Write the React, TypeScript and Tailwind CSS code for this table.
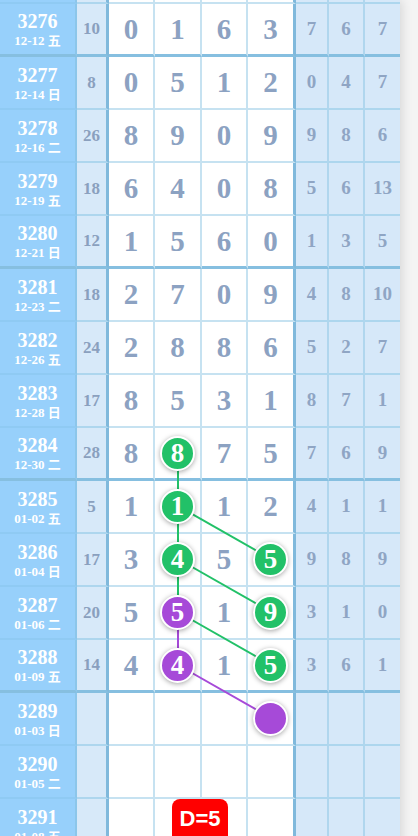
import React from "react"

type Mark = { col: number; color: "g" | "p"; empty?: boolean }

type Row = {
  issue: string
  date: string
  sum?: string
  digits?: string[]
  tail?: string[]
  marks?: Mark[]
  thick?: boolean
}

const rows: Row[] = [
  { issue: "3276", date: "12-12 五", sum: "10", digits: ["0", "1", "6", "3"], tail: ["7", "6", "7"], thick: true },
  { issue: "3277", date: "12-14 日", sum: "8", digits: ["0", "5", "1", "2"], tail: ["0", "4", "7"] },
  { issue: "3278", date: "12-16 二", sum: "26", digits: ["8", "9", "0", "9"], tail: ["9", "8", "6"] },
  { issue: "3279", date: "12-19 五", sum: "18", digits: ["6", "4", "0", "8"], tail: ["5", "6", "13"] },
  { issue: "3280", date: "12-21 日", sum: "12", digits: ["1", "5", "6", "0"], tail: ["1", "3", "5"], thick: true },
  { issue: "3281", date: "12-23 二", sum: "18", digits: ["2", "7", "0", "9"], tail: ["4", "8", "10"] },
  { issue: "3282", date: "12-26 五", sum: "24", digits: ["2", "8", "8", "6"], tail: ["5", "2", "7"] },
  { issue: "3283", date: "12-28 日", sum: "17", digits: ["8", "5", "3", "1"], tail: ["8", "7", "1"] },
  {
    issue: "3284", date: "12-30 二", sum: "28", digits: ["8", "8", "7", "5"], tail: ["7", "6", "9"], thick: true,
    marks: [{ col: 1, color: "g" }],
  },
  {
    issue: "3285", date: "01-02 五", sum: "5", digits: ["1", "1", "1", "2"], tail: ["4", "1", "1"],
    marks: [{ col: 1, color: "g" }],
  },
  {
    issue: "3286", date: "01-04 日", sum: "17", digits: ["3", "4", "5", "5"], tail: ["9", "8", "9"],
    marks: [{ col: 1, color: "g" }, { col: 3, color: "g" }],
  },
  {
    issue: "3287", date: "01-06 二", sum: "20", digits: ["5", "5", "1", "9"], tail: ["3", "1", "0"],
    marks: [{ col: 1, color: "p" }, { col: 3, color: "g" }],
  },
  {
    issue: "3288", date: "01-09 五", sum: "14", digits: ["4", "4", "1", "5"], tail: ["3", "6", "1"], thick: true,
    marks: [{ col: 1, color: "p" }, { col: 3, color: "g" }],
  },
  { issue: "3289", date: "01-03 日", marks: [{ col: 3, color: "p", empty: true }] },
  { issue: "3290", date: "01-05 二" },
  { issue: "3291", date: "01-08 五" },
]

const serif = { fontFamily: '"Liberation Serif", "Noto Sans CJK SC", serif' }

const digitW = ["w-[46px]", "w-[47px]", "w-[46px]", "w-[48px]"]
const tailW = ["w-[33px]", "w-[36px]", "w-[35px]"]

function Ball({ mark, value }: { mark: Mark; value?: string }) {
  const bg = mark.color === "g" ? "bg-[#22c168]" : "bg-[#a64ad8]"
  return (
    <div
      className={`relative z-20 flex h-[35px] w-[35px] items-center justify-center rounded-full border-2 border-white ${bg} shadow-[0_1px_5px_rgba(0,0,0,0.35)]`}
    >
      {!mark.empty && <span className="text-[27px] font-bold leading-none text-white">{value}</span>}
    </div>
  )
}

function ChartRow({ row }: { row: Row }) {
  const bThin = row.thick ? "border-b-[3px]" : "border-b-2"
  const lineWhite = row.thick ? "border-b-[#86bfe0]" : "border-b-[#c6e2f1]"
  const lineBlue = row.thick ? "border-b-[#86bfe0]" : "border-b-[#add6ee]"
  return (
    <div className="flex h-[53px]">
      <div
        className={`flex w-[77px] flex-col items-center justify-center border-r-2 border-r-[#8cc6ea] bg-[#97d0fb] text-white ${bThin} ${row.thick ? "border-b-[#86bfe0]" : "border-b-[#8fcaf3]"}`}
      >
        <span className="text-[20px] font-bold leading-[22px]">{row.issue}</span>
        <span className="mt-[2px] text-[13px] font-bold leading-[14px]">{row.date}</span>
      </div>
      <div
        className={`flex w-[32px] items-center justify-center border-r-[3px] border-r-[#80b9dc] bg-[#d7e9f9] text-[17px] font-bold text-[#8aa0be] ${bThin} ${lineBlue}`}
      >
        {row.sum}
      </div>
      {digitW.map((w, i) => {
        const mark = row.marks?.find((m) => m.col === i)
        const last = i === 3
        return (
          <div
            key={i}
            className={`flex ${w} items-center justify-center bg-white ${bThin} ${lineWhite} ${last ? "border-r-[3px] border-r-[#80b9dc]" : "border-r-2 border-r-[#c6e2f1]"}`}
          >
            {mark ? (
              <Ball mark={mark} value={row.digits?.[i]} />
            ) : (
              <span className="text-[29px] font-bold leading-none text-[#8ca2c2]">{row.digits?.[i]}</span>
            )}
          </div>
        )
      })}
      {tailW.map((w, i) => (
        <div
          key={i}
          className={`flex ${w} items-center justify-center bg-[#d6e8f9] text-[19px] font-bold text-[#8fa5c4] ${bThin} ${lineBlue} ${i < 2 ? "border-r-2 border-r-[#b0d6ee]" : ""}`}
        >
          {row.tail?.[i]}
        </div>
      ))}
    </div>
  )
}

const cx = [131, 178, 224, 271]
const cy = (i: number) => 2 + 27 + (i - 0) * 53

export default function App() {
  // index of 3284 is 8
  const g = "#22c168"
  const p = "#a64ad8"
  const lines = [
    { x1: cx[1], y1: cy(8), x2: cx[1], y2: cy(9), c: g },
    { x1: cx[1], y1: cy(9), x2: cx[1], y2: cy(10), c: g },
    { x1: cx[1], y1: cy(10), x2: cx[1], y2: cy(11), c: g },
    { x1: cx[1], y1: cy(9), x2: cx[3], y2: cy(10), c: g },
    { x1: cx[1], y1: cy(10), x2: cx[3], y2: cy(11), c: g },
    { x1: cx[1], y1: cy(11), x2: cx[3], y2: cy(12), c: g },
    { x1: cx[1], y1: cy(11), x2: cx[1], y2: cy(12), c: p },
    { x1: cx[1], y1: cy(12), x2: cx[3], y2: cy(13), c: p },
  ]

  return (
    <div className="relative h-[836px] w-[418px] overflow-hidden bg-[#f4f4f4]" style={serif}>
      <div className="relative w-[400px] bg-white shadow-[2px_0_10px_rgba(0,0,0,0.12)]">
        {/* tail of the previous row */}
        <div className="flex h-[4px]">
          <div className="w-[77px] border-r-2 border-b-2 border-r-[#8cc6ea] border-b-[#8fcaf3] bg-[#97d0fb]" />
          <div className="w-[32px] border-r-[3px] border-b-2 border-r-[#80b9dc] border-b-[#add6ee] bg-[#d7e9f9]" />
          <div className="w-[46px] border-r-2 border-b-2 border-[#c6e2f1]" />
          <div className="w-[47px] border-r-2 border-b-2 border-[#c6e2f1]" />
          <div className="w-[46px] border-r-2 border-b-2 border-[#c6e2f1]" />
          <div className="w-[48px] border-r-[3px] border-b-2 border-r-[#80b9dc] border-b-[#c6e2f1]" />
          <div className="w-[33px] border-r-2 border-b-2 border-r-[#b0d6ee] border-b-[#add6ee] bg-[#d6e8f9]" />
          <div className="w-[36px] border-r-2 border-b-2 border-r-[#b0d6ee] border-b-[#add6ee] bg-[#d6e8f9]" />
          <div className="w-[35px] border-b-2 border-b-[#add6ee] bg-[#d6e8f9]" />
        </div>

        {rows.map((r) => (
          <ChartRow key={r.issue} row={r} />
        ))}

        <svg className="pointer-events-none absolute left-0 top-0 z-10" width="400" height="900">
          {lines.map((l, i) => (
            <line key={i} x1={l.x1} y1={l.y1} x2={l.x2} y2={l.y2} stroke={l.c} strokeWidth="2" />
          ))}
        </svg>
      </div>

      <div
        className="absolute left-[172px] top-[799px] flex h-[48px] w-[56px] items-start justify-center rounded-lg bg-[#ff0000] pt-[9px] text-[22px] font-bold leading-none text-white"
        style={{ fontFamily: '"Liberation Sans", Arial, sans-serif' }}
      >
        D=5
      </div>
    </div>
  )
}
